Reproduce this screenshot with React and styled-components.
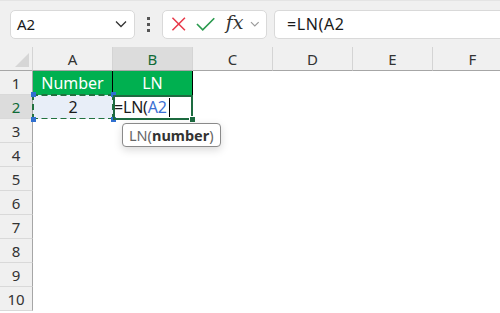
import React from 'react';
import styled, { createGlobalStyle } from 'styled-components';

const GlobalStyle = createGlobalStyle`
  html, body { margin: 0; padding: 0; background: #ffffff; }
  body { font-family: "Noto Sans", "Open Sans", sans-serif; overflow: hidden; }
`;

const COLS = ['A', 'B', 'C', 'D', 'E', 'F'];
const ROWS = [1, 2, 3, 4, 5, 6, 7, 8, 9, 10];

export default function App() {
  return (
    <Page>
      <GlobalStyle />
      <Toolbar>
        <NameBox>
          <span>A2</span>
          <Chevron width="12" height="8" viewBox="0 0 12 8">
            <path d="M1 1.5 L6 6.5 L11 1.5" fill="none" stroke="#333" strokeWidth="1.3" />
          </Chevron>
        </NameBox>
        <Dots>
          <i /><i /><i />
        </Dots>
        <FxBox>
          <svg width="16" height="16" viewBox="0 0 16 16">
            <path d="M1.5 1.5 L14.5 14.5 M14.5 1.5 L1.5 14.5" stroke="#e8394a" strokeWidth="1.6" />
          </svg>
          <svg width="20" height="16" viewBox="0 0 20 16">
            <path d="M1 8 L7 14 L19 2" fill="none" stroke="#2a9a4e" strokeWidth="1.7" />
          </svg>
          <FxLabel>fx</FxLabel>
          <svg width="10" height="6" viewBox="0 0 10 6">
            <path d="M1 1 L5 5 L9 1" fill="none" stroke="#9a9a9a" strokeWidth="1.2" />
          </svg>
        </FxBox>
        <FormulaInput>=LN(A2</FormulaInput>
      </Toolbar>
      <Sheet>
        <Corner>
          <svg width="14" height="14" viewBox="0 0 14 14">
            <path d="M14 0 L14 14 L0 14 Z" fill="#d6d6d6" />
          </svg>
        </Corner>
        {COLS.map(c => (
          <ColHeader key={c} active={c === 'B'}>{c}</ColHeader>
        ))}
        {ROWS.map(r => (
          <React.Fragment key={r}>
            <RowHeader active={r === 2}>{r}</RowHeader>
            {COLS.map(c => {
              if (r === 1 && c === 'A') return <Cell key={c} head>Number</Cell>;
              if (r === 1 && c === 'B') return <Cell key={c} head>LN</Cell>;
              if (r === 2 && c === 'A') return <RefCell key={c}>2<Handle /><Handle right /><Handle bottom /><Handle right bottom /></RefCell>;
              if (r === 2 && c === 'B')
                return (
                  <EditCell key={c}>
                    =LN(<RefText>A2</RefText><Caret />
                    <FillHandle />
                    <Tip>
                      LN(<b>number</b>)
                    </Tip>
                  </EditCell>
                );
              return <Cell key={c} />;
            })}
          </React.Fragment>
        ))}
      </Sheet>
    </Page>
  );
}

const Page = styled.div`
  width: 500px;
  height: 313px;
  overflow: hidden;
  display: flex;
  flex-direction: column;
`;

const Toolbar = styled.div`
  height: 47px;
  box-sizing: border-box;
  background: #f0f0f0;
  border-top: 1px solid #e4e4e4;
  display: flex;
  align-items: center;
  padding: 0 0 0 10px;
`;

const NameBox = styled.div`
  width: 125px;
  height: 29px;
  box-sizing: border-box;
  background: #fff;
  border: 1px solid #d9d9d9;
  border-radius: 5px;
  display: flex;
  align-items: center;
  justify-content: space-between;
  padding: 0 7px 0 6px;
  font-size: 15px;
  color: #1a1a1a;
`;

const Chevron = styled.svg`
  display: block;
`;

const Dots = styled.div`
  width: 27px;
  display: flex;
  flex-direction: column;
  align-items: center;
  gap: 3px;
  i {
    width: 3px;
    height: 3px;
    background: #555;
  }
`;

const FxBox = styled.div`
  width: 105px;
  height: 29px;
  box-sizing: border-box;
  background: #fff;
  border: 1px solid #d9d9d9;
  border-radius: 5px;
  display: flex;
  align-items: center;
  padding: 0 6px 0 8px;
  gap: 10px;
  svg { display: block; }
  svg:last-child { margin-left: -3px; }
`;

const FxLabel = styled.span`
  font-family: "DejaVu Serif", "Liberation Serif", serif;
  font-style: italic;
  font-size: 19px;
  color: #333;
  line-height: 1;
  margin-top: -3px;
`;

const FormulaInput = styled.div`
  margin-left: 7px;
  flex: 1;
  height: 29px;
  box-sizing: border-box;
  background: #fff;
  border: 1px solid #d9d9d9;
  border-right: none;
  border-radius: 5px 0 0 5px;
  display: flex;
  align-items: center;
  padding-left: 12px;
  font-size: 16px;
  letter-spacing: 0.6px;
  color: #1a1a1a;
`;

const Sheet = styled.div`
  display: grid;
  grid-template-columns: 33px repeat(6, 80px);
  grid-template-rows: repeat(11, 24px);
  font-size: 16px;
  color: #1a1a1a;
`;

const Corner = styled.div`
  background: #f0f0f0;
  border-right: 1px solid #d4d4d4;
  border-bottom: 1px solid #a6a6a6;
  display: flex;
  align-items: flex-end;
  justify-content: flex-end;
  padding: 0 3px 3px 0;
  box-sizing: border-box;
`;

const ColHeader = styled.div`
  background: ${({ active }) => (active ? '#dcdcdc' : '#f0f0f0')};
  color: ${({ active }) => (active ? '#0f6a37' : '#333')};
  border-right: 1px solid #d4d4d4;
  border-bottom: 1px solid #a6a6a6;
  box-sizing: border-box;
  display: flex;
  align-items: center;
  justify-content: center;
  font-size: 15px;
`;

const RowHeader = styled.div`
  background: ${({ active }) => (active ? '#dcdcdc' : '#f0f0f0')};
  color: ${({ active }) => (active ? '#0f6a37' : '#333')};
  border-right: 1px solid #a6a6a6;
  border-bottom: 1px solid #d9d9d9;
  box-sizing: border-box;
  display: flex;
  align-items: center;
  justify-content: center;
  font-size: 15px;
`;

const Cell = styled.div`
  background: ${({ head }) => (head ? '#00b050' : '#fff')};
  color: ${({ head }) => (head ? '#fff' : '#1a1a1a')};
  border-right: ${({ head }) => (head ? '1px solid #000' : 'none')};
  box-sizing: border-box;
  display: flex;
  align-items: center;
  justify-content: center;
  position: relative;
`;

const RefCell = styled.div`
  background: #e8eef8;
  display: flex;
  align-items: center;
  justify-content: center;
  position: relative;
  &::after {
    content: '';
    position: absolute;
    inset: -1px -1px -1px -1px;
    border: 2px dashed #21713f;
    pointer-events: none;
  }
`;

const Handle = styled.i`
  position: absolute;
  width: 5px;
  height: 5px;
  background: #2f6fd0;
  z-index: 2;
  top: ${({ bottom }) => (bottom ? 'auto' : '-3px')};
  bottom: ${({ bottom }) => (bottom ? '-3px' : 'auto')};
  left: ${({ right }) => (right ? 'auto' : '-2px')};
  right: ${({ right }) => (right ? '-3px' : 'auto')};
`;

const EditCell = styled.div`
  position: relative;
  display: flex;
  align-items: center;
  padding-left: 1px;
  font-size: 16px;
  letter-spacing: -0.2px;
  z-index: 3;
  &::after {
    content: '';
    position: absolute;
    inset: 0 0 -1px 0;
    border: 2px solid #1d6b40;
    pointer-events: none;
  }
`;

const RefText = styled.span`
  color: #3b6fd3;
`;

const Caret = styled.span`
  width: 1px;
  height: 19px;
  background: #000;
  margin-left: 2px;
`;

const FillHandle = styled.i`
  position: absolute;
  right: -3px;
  bottom: -4px;
  width: 5px;
  height: 5px;
  background: #1d6b40;
  border: 1px solid #fff;
  z-index: 4;
`;

const Tip = styled.div`
  position: absolute;
  left: 9px;
  top: 28px;
  height: 24px;
  box-sizing: border-box;
  padding: 0 6px;
  background: #fff;
  border: 1px solid #8a8a8a;
  border-radius: 4px;
  box-shadow: 0 3px 8px rgba(0, 0, 0, 0.15);
  display: flex;
  align-items: center;
  white-space: nowrap;
  font-size: 14.5px;
  letter-spacing: 0;
  color: #666;
  z-index: 5;
  b {
    color: #333;
    font-weight: 700;
  }
`;
